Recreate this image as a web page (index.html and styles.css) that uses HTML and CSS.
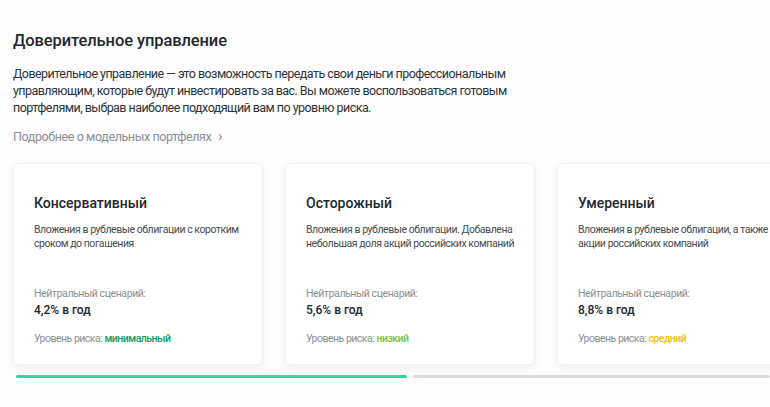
FILE: index.html
```html
<!DOCTYPE html>
<html lang="ru">
<head>
    <meta charset="UTF-8">
    <meta name="viewport" content="width=device-width, initial-scale=1.0">
    <title>Доверительное управление</title>
    <link rel="stylesheet" href="styles.css">
</head>
<body>

    <div class="page">
        <h1>Доверительное управление</h1>

        <p class="intro">
            Доверительное управление — это возможность передать свои деньги профессиональным<br>
            управляющим, которые будут инвестировать за вас. Вы можете воспользоваться готовым<br>
            портфелями, выбрав наиболее подходящий вам по уровню риска.
        </p>

        <a class="more" href="#">Подробнее о модельных портфелях <span class="arrow">&#8250;</span></a>

        <div class="cards">
            <div class="card">
                <h2>Консервативный</h2>
                <p class="desc">Вложения в рублевые облигации с коротким сроком до погашения</p>
                <p class="label">Нейтральный сценарий:</p>
                <p class="rate">4,2% в год</p>
                <p class="risk">Уровень риска: <span class="risk-min">минимальный</span></p>
            </div>
            <div class="card">
                <h2>Осторожный</h2>
                <p class="desc">Вложения в рублевые облигации. Добавлена небольшая доля акций российских компаний</p>
                <p class="label">Нейтральный сценарий:</p>
                <p class="rate">5,6% в год</p>
                <p class="risk">Уровень риска: <span class="risk-low">низкий</span></p>
            </div>
            <div class="card">
                <h2>Умеренный</h2>
                <p class="desc">Вложения в рублевые облигации, а также акции российских компаний</p>
                <p class="label">Нейтральный сценарий:</p>
                <p class="rate">8,8% в год</p>
                <p class="risk">Уровень риска: <span class="risk-mid">средний</span></p>
            </div>
        </div>

        <div class="progress">
            <div class="progress-done"></div>
            <div class="progress-rest"></div>
        </div>
    </div>

</body>
</html>
```

FILE: styles.css
```css
body {
    font-family: Roboto, Arial, sans-serif;
    background-color: #fdfdfd;
    color: #21272c;
    margin: 0;
    padding: 0;
    overflow: hidden;
}

.page {
    padding: 30px 0 0 13px;
}

h1 {
    font-size: 16.5px;
    font-weight: 500;
    letter-spacing: -0.1px;
    margin: 0 0 13px;
    line-height: 22px;
}

.intro {
    font-size: 12.5px;
    letter-spacing: -0.55px;
    line-height: 17px;
    color: #2f3439;
    margin: 0 0 10px;
    white-space: nowrap;
}

.more {
    display: inline-block;
    font-size: 12.5px;
    letter-spacing: -0.4px;
    color: #8b8f93;
    text-decoration: none;
    line-height: 17px;
}

.arrow {
    margin-left: 4px;
    font-size: 15px;
}

.cards {
    display: flex;
    gap: 22px;
    margin-top: 18px;
}

.card {
    flex: 0 0 250px;
    box-sizing: border-box;
    height: 202px;
    padding: 29px 14px 0 20px;
    background-color: #fff;
    border: 1px solid #f1f1f1;
    border-radius: 5px;
    box-shadow: 0 3px 8px rgba(0, 0, 0, 0.06);
    display: flex;
    flex-direction: column;
}

.card h2 {
    font-size: 14px;
    font-weight: 500;
    margin: 0 0 10px;
    line-height: 20px;
    color: #21272c;
}

.desc {
    font-size: 10.5px;
    letter-spacing: -0.45px;
    line-height: 14px;
    color: #474c51;
    margin: 0;
    height: 64px;
}

.label {
    font-size: 10.5px;
    letter-spacing: -0.4px;
    line-height: 14px;
    color: #8b8f93;
    margin: 0;
}

.rate {
    font-size: 12px;
    font-weight: 500;
    line-height: 17px;
    margin: 1px 0 13px;
    color: #21272c;
}

.risk {
    font-size: 10.5px;
    letter-spacing: -0.5px;
    line-height: 14px;
    color: #8b8f93;
    margin: 0;
}

.risk-min {
    color: #17975f;
    font-weight: 500;
}

.risk-low {
    color: #7ac243;
    font-weight: 500;
}

.risk-mid {
    color: #f2c200;
    font-weight: 500;
}

.progress {
    display: flex;
    gap: 6px;
    margin: 10px 0 0 3px;
}

.progress-done {
    width: 391px;
    height: 3px;
    background-color: #3ad59a;
    border-radius: 2px;
}

.progress-rest {
    flex: 1;
    height: 3px;
    background-color: #dcdcdc;
    border-radius: 2px;
}
```
